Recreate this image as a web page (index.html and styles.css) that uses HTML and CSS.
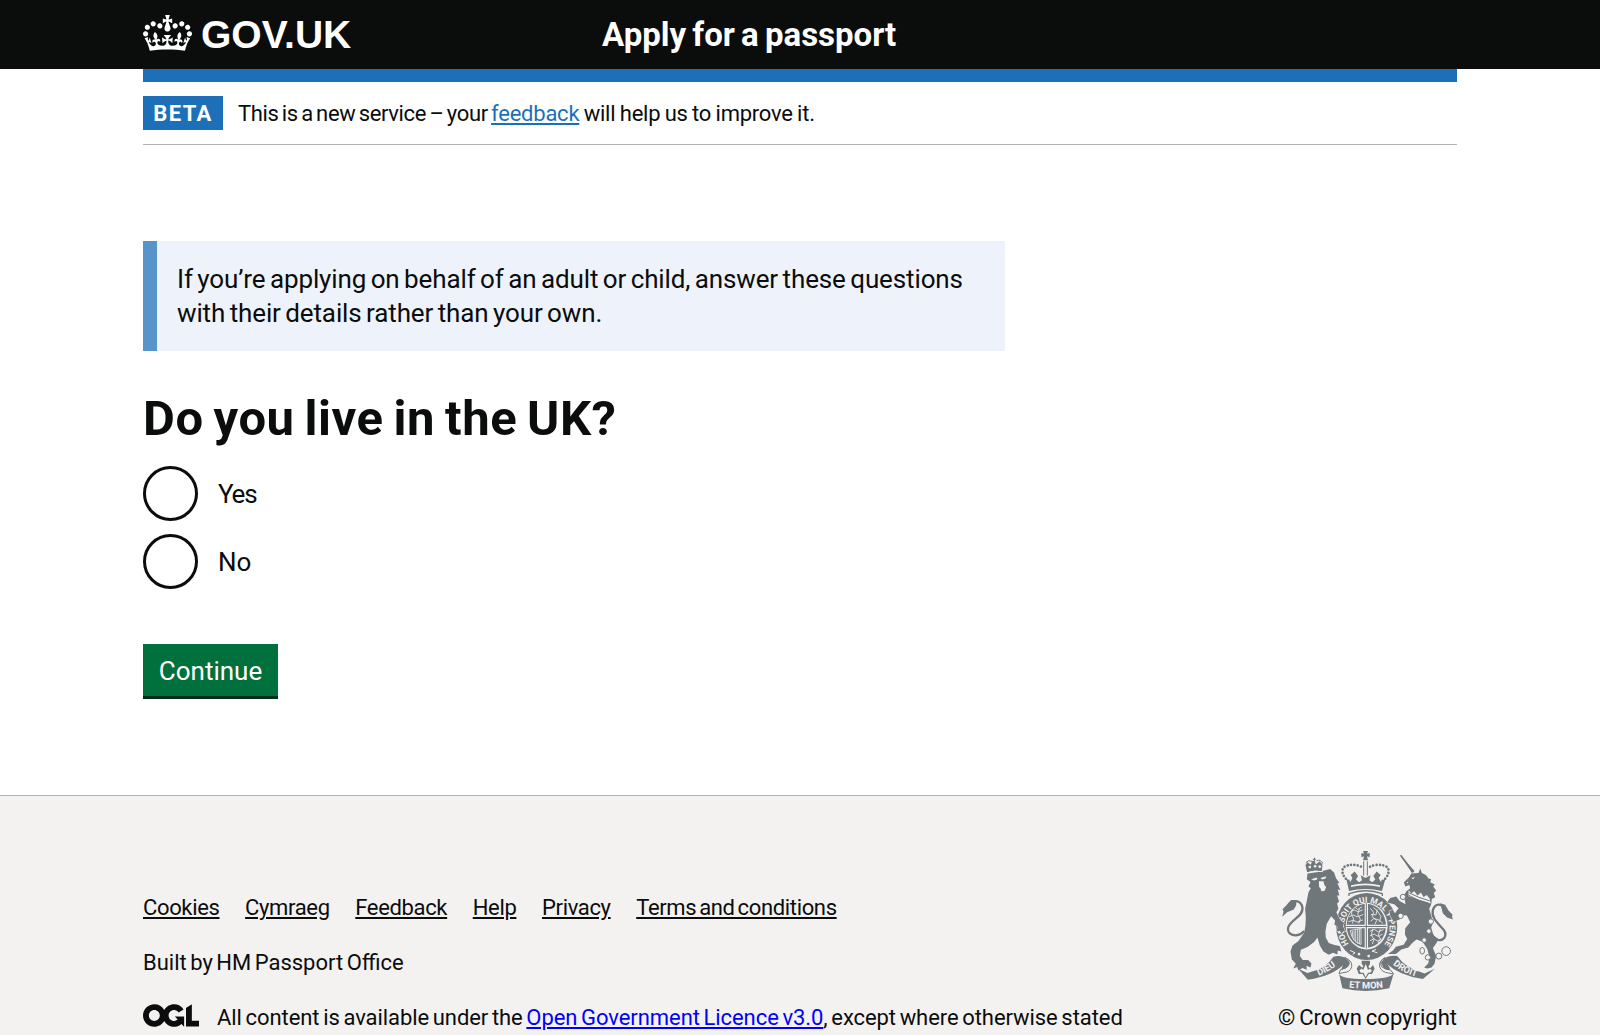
FILE: index.html
```
<!DOCTYPE html>
<html lang="en">
<head>
<meta charset="utf-8">
<title>Do you live in the UK? - Apply for a passport</title>
<link rel="stylesheet" href="styles.css">
</head>
<body>
<header class="header">
  <div class="container header-inner">
    <a class="brand" href="#">
      <svg class="crown" viewBox="0 0 132 97" fill="currentColor" fill-rule="evenodd" aria-hidden="true"><path d="M25 30.2c3.5 1.5 7.7-.2 9.1-3.7 1.5-3.6-.2-7.8-3.9-9.2-3.6-1.4-7.6.3-9.1 3.9-1.4 3.5.3 7.5 3.9 9zM9 39.5c3.6 1.5 7.8-.2 9.2-3.7 1.5-3.6-.2-7.8-3.9-9.1-3.6-1.5-7.6.2-9.1 3.8-1.4 3.5.3 7.5 3.8 9zM4.4 57.2c3.5 1.5 7.7-.2 9.1-3.8 1.5-3.6-.2-7.7-3.9-9.1-3.5-1.5-7.6.3-9.1 3.8-1.4 3.5.3 7.6 3.9 9.1zm38.3-21.4c3.5 1.5 7.7-.2 9.1-3.8 1.5-3.6-.2-7.7-3.9-9.1-3.6-1.5-7.6.3-9.1 3.8-1.3 3.6.4 7.7 3.9 9.1zm64.4-5.6c-3.6 1.5-7.8-.2-9.1-3.7-1.5-3.6.2-7.8 3.8-9.2 3.6-1.4 7.7.3 9.2 3.9 1.3 3.5-.4 7.5-3.9 9zm15.9 9.3c-3.6 1.5-7.7-.2-9.1-3.7-1.5-3.6.2-7.8 3.7-9.1 3.6-1.5 7.7.2 9.2 3.8 1.5 3.5-.3 7.5-3.8 9zm4.7 17.7c-3.6 1.5-7.8-.2-9.2-3.8-1.5-3.6.2-7.7 3.9-9.1 3.6-1.5 7.7.3 9.2 3.8 1.3 3.5-.4 7.6-3.9 9.1zM89.3 35.8c-3.6 1.5-7.8-.2-9.2-3.8-1.4-3.6.2-7.7 3.9-9.1 3.6-1.5 7.7.3 9.2 3.8 1.4 3.6-.3 7.7-3.9 9.1zM69.7 17.7l8.9 4.7V9.3l-8.9 2.8c-.2-.3-.5-.6-.9-.9L72.4 0H59.6l3.5 11.2c-.3.3-.6.5-.9.9l-8.8-2.8v13.1l8.8-4.7c.3.3.6.7.9.9l-5 15.4v.1c-.2.8-.4 1.6-.4 2.4 0 4.1 3.1 7.5 7 8.1h.2c.3 0 .7.1 1 .1.4 0 .7 0 1-.1h.2c4-.6 7.1-4.1 7.1-8.1 0-.8-.1-1.7-.4-2.4V34l-5.1-15.4c.4-.2.7-.6 1-.9zM66 92.8c16.9 0 32.8 1.1 47.1 3.2 4-16.9 8.9-26.7 14-33.5l-9.6-3.4c1 4.9 1.1 7.2 0 10.2-1.5-1.4-3-4.3-4.2-8.7L108.6 76c2.8-2 5-3.2 7.5-3.3-4.4 9.4-10 11.9-13.6 11.2-4.3-.8-6.3-4.6-5.6-7.9 1-4.7 5.7-5.9 8-.5 4.3-8.7-3-11.4-7.6-8.8 7.1-7.2 7.9-13.5 2.1-21.1-8 6.1-8.1 12.3-4.5 20.8-4.7-5.4-12.1-2.5-9.5 6.2 3.4-5.2 7.9-2 7.2 3.1-.6 4.3-6.4 7.8-13.5 7.2-10.3-.9-10.9-8-11.2-13.8 2.5-.5 7.1 1.8 11 7.3L80.2 60c-4.1 4.4-8 5.3-12.3 5.4 1.4-4.4 8-11.6 8-11.6H55.5s6.4 7.2 7.9 11.6c-4.2-.1-8-1-12.3-5.4l1.4 16.4c3.9-5.5 8.5-7.7 10.9-7.3-.3 5.8-.9 12.8-11.1 13.8-7.2.6-12.9-2.9-13.5-7.2-.7-5 3.8-8.3 7.1-3.1 2.7-8.7-4.6-11.6-9.4-6.2 3.7-8.5 3.6-14.7-4.6-20.8-5.8 7.6-5 13.9 2.2 21.1-4.7-2.6-11.9.1-7.7 8.8 2.3-5.5 7.1-4.2 8.1.5.7 3.3-1.3 7.1-5.7 7.9-3.5.7-9-1.8-13.5-11.2 2.5.1 4.7 1.3 7.5 3.3l-4.7-15.4c-1.2 4.4-2.7 7.2-4.3 8.7-1.1-3-.9-5.3 0-10.2l-9.5 3.4c5 6.9 9.9 16.7 14 33.5 14.8-2.1 30.8-3.2 47.7-3.2z"/></svg>
      <span class="brand-name">GOV.UK</span>
    </a>
    <a class="service-name" href="#">Apply for a passport</a>
  </div>
</header>
<div class="container">
  <div class="header-bar"></div>
  <div class="phase">
    <strong class="tag">BETA</strong>
    <span class="phase-text"><span class="phase-intro">This is a new service – your </span><a class="link" href="#">feedback</a> will help us to improve it.</span>
  </div>
  <main class="main">
    <div class="inset">If you’re applying on behalf of an adult or child, answer these questions<br>with their details rather than your own.</div>
    <h1 class="title">Do you live in the UK?</h1>
    <div class="radios">
      <label class="radio"><input class="radio-input" type="radio" name="uk"><span class="radio-label">Yes</span></label>
      <label class="radio"><input class="radio-input" type="radio" name="uk"><span class="radio-label">No</span></label>
    </div>
    <button class="button" type="button">Continue</button>
  </main>
</div>
<footer class="footer">
  <div class="container footer-inner">
    <div class="footer-meta">
      <nav class="footer-links">
        <a href="#">Cookies</a><a href="#">Cymraeg</a><a href="#">Feedback</a><a href="#">Help</a><a href="#">Privacy</a><a href="#">Terms and conditions</a>
      </nav>
      <div class="built">Built by HM Passport Office</div>
      <div class="licence">
        <svg class="ogl" viewBox="0 0 483.2 195.7" fill="currentColor" aria-hidden="true"><path d="M421.5 142.8V.1l-50.7 32.3v161.1h112.4v-50.7zm-122.3-9.6A47.12 47.12 0 0 1 221 97.8c0-26 21.1-47.1 47.1-47.1 16.7 0 31.4 8.7 39.7 21.8l42.7-27.2A97.63 97.63 0 0 0 268.1 0c-36.5 0-68.3 20.1-85.1 49.7A98 98 0 0 0 97.8 0C43.9 0 0 43.9 0 97.8s43.9 97.8 97.8 97.8c36.5 0 68.3-20.1 85.1-49.7a97.76 97.76 0 0 0 149.6 25.4l19.4 22.2h3v-87.8h-80l24.3 27.5zM97.8 145c-26 0-47.1-21.1-47.1-47.1s21.1-47.1 47.1-47.1 47.1 21.1 47.1 47.1S123.8 145 97.8 145"/></svg>
        <span class="licence-text">All content is available under the <a class="licence-link" href="#">Open Government Licence v3.0</a>, except where otherwise stated</span>
      </div>
    </div>
    <a class="copyright" href="#">
      <svg class="crest" viewBox="30 25 525 430" aria-hidden="true">
        <defs>
          <path id="garter" d="M236 310A69 76 0 1 1 343 311"/>
          <path id="scroll-left" d="M128 412Q176 398 212 364"/>
          <path id="scroll-mid" d="M224 440Q288 449 352 440"/>
          <path id="scroll-right" d="M360 365Q396 399 450 412"/>
        </defs>
        <!-- royal crown -->
        <path class="ink" d="M279 31H294L291 39 299 37V50L291 47 294 59H279L282 47 274 50V37L282 39Z"/>
        <path class="line pearls" stroke-width="8" d="M235 121C217 109 209 83 228 76C249 68 266 75 276 79M338 121C356 109 364 83 345 76C324 68 308 75 298 79"/>
        <path class="line" stroke-width="3" d="M281 62V105M292 62V105"/>
        <path class="ink" d="M237 151L228 112 241 124 247 112 242 103 254 93 264 106 258 117 267 125 276 119 272 104 286 112 302 104 298 119 307 125 316 117 310 106 320 93 332 103 326 112 333 124 347 112 336 151Q286 139 237 151Z"/>
        <path class="paper" d="M243 134Q286 124 330 134V139Q286 129 243 139Z"/>
        <path class="line" stroke-width="4" d="M237 166V159Q287 142 337 159V166"/>
        <!-- garter and shield -->
        <ellipse class="ink" cx="290" cy="258" rx="92" ry="101"/>
        <ellipse class="paper" cx="290" cy="257" rx="63" ry="70"/>
        <ellipse class="ink" cx="289" cy="256" rx="59" ry="66"/>
        <path class="white-line" stroke-width="10" d="M289 188V324M228 258H350"/>
        <path class="line" stroke-width="3" d="M289 188V324M228 258H350"/>
        <path class="white-line" stroke-width="2.5" d="M242 213L252 208 264 214 278 208M237 229L249 223 261 229 280 222M235 244L249 239 262 245 279 238M256 201L262 207 276 199M247 206L244 222 251 236 247 249M268 205L263 222 271 236 266 249M301 203L311 216 306 228 320 240 315 251M310 201L321 210 333 228 328 244M302 242L312 234 328 239 339 249M322 207L318 223 303 222M300 272L313 267 325 274 341 267M300 286L313 281 325 288 338 281M300 301L312 295 323 302 334 295M308 266L304 284 312 297 307 311M331 266L325 284 331 295 324 308M241 270L273 264V312Q245 304 241 270M247 272V289M252 271V299M257 269V305M263 267V309M268 266V311"/>
        <text class="motto garter-text"><textPath href="#garter" startOffset="50%">HONI SOIT QUI MAL Y PENSE</textPath></text>
        <circle class="paper" cx="267" cy="341" r="4"/><circle class="paper" cx="296" cy="347" r="4"/><path class="white-line" stroke-width="3" d="M240 330L255 337 248 342M322 337L306 332 318 327"/>
        <!-- lion -->
        <g transform="translate(15 15)">
          <path class="ink edge" d="M97 84L130 79 165 70 177 81 183 98 193 112 187 113 196 133 188 132 193 150 186 150 192 168 186 174 190 190 184 200 190 214 197 225 207 232 204 242 211 258 203 257 202 268 194 256 186 258 187 242 178 238 180 225 168 212 155 235 151 258 152 276 161 293 178 299 194 302 199 318 188 315 187 327 174 322 161 328 145 318 134 300 127 276 117 290 97 305 77 313 74 332 83 344 99 344 109 354 106 366 94 361 95 373 82 368 70 375 66 365 54 369 62 355 50 342 46 318 52 300 70 287 87 262 91 240 92 215 90 190 96 160 100 140 107 128 100 123 106 109 95 101Z"/>
          <path class="line" stroke-width="7" d="M87 257C64 280 33 268 39 246C47 221 83 215 82 188C79 162 49 160 38 181"/>
          <path class="ink" d="M64 164L48 163 36 177 22 191 25 198 21 214 36 200 56 192 63 179Z"/>
          <path class="paper" d="M108 101L125 96 127 101 117 105ZM136 97L154 92 151 99 141 102ZM131 107H145L148 118 153 125 148 136 139 137 136 128 132 124Z"/>
          <path class="ink" d="M96 80L91 58 97 50 107 57 111 46 118 45 122 56 134 47 142 57 140 78Q118 72 96 80Z"/>
          <path class="line" stroke-width="3" d="M118 36V48M113 41H123M92 51Q99 42 111 47M124 46Q137 39 143 54"/>
          <path class="white-line" stroke-width="3" d="M95 82Q118 73 143 78"/>
          <circle class="paper" cx="104" cy="64" r="4"/><circle class="paper" cx="120" cy="62" r="4"/><circle class="paper" cx="134" cy="63" r="4"/>
        </g>
        <!-- unicorn -->
        <g transform="translate(270 15)">
          <path class="ink edge" d="M120 27L164 76 156 82ZM164 83L176 82 181 69 186 82 198 88 206 99 214 101 211 110 225 117 220 123 229 135 222 142 226 155 216 160 214 177 208 190 213 207 220 230 214 246 221 270 236 281 229 294 219 308 229 332 224 355 215 366 202 369 193 366 205 354 209 337 202 310 188 289 170 282 158 292 145 306 124 312 108 326 84 326 99 315 108 304 131 298 142 281 135 267 136 248 151 230 141 210 129 209 119 222 101 229 91 211 88 197 98 193 105 203 116 188 103 176 81 171 91 157 109 153 119 166 137 176 132 150 140 136 151 128 148 118 136 123 132 110 147 96 154 84Z"/>
          <path class="line horn" stroke-width="5" d="M122 29L161 80"/>
          <path class="line" stroke-width="7" d="M217 268C236 300 268 277 253 255C239 237 213 218 219 194C226 171 247 174 253 190"/>
          <path class="ink" d="M241 173L256 178 266 195 278 207 277 214 279 222 262 216 249 203 245 188Z"/>
          <path class="paper" d="M146 134L154 143 163 137 173 150 183 141 191 154 201 148 210 160 212 174 146 152ZM154 97L165 94 160 101ZM140 111L145 108 144 113Z"/>
          <path class="line" stroke-width="3" d="M146 149Q176 168 207 173M148 142Q176 157 210 166"/>
          <g class="paper chain"><circle cx="129" cy="154" r="8"/><circle cx="122" cy="211" r="8"/><circle cx="213" cy="228" r="8"/><circle cx="207" cy="257" r="7"/><circle cx="193" cy="284" r="7"/><ellipse cx="187" cy="316" rx="7" ry="10"/><circle cx="204" cy="336" r="8"/><circle cx="237" cy="332" r="9"/><circle cx="259" cy="317" r="13"/></g>
        </g>
        <!-- scroll -->
        <path class="ink" d="M84 385L112 398Q168 385 190 349Q208 343 224 351L239 366 229 385Q223 393 215 394Q211 380 226 368Q188 408 113 418Z"/>
        <path class="ink" d="M495 385L464 399Q406 384 382 347Q365 343 345 352L333 366 340 381Q347 390 360 393Q363 380 347 368Q390 407 459 416Z"/>
        <path class="paper outline" d="M224 351Q244 363 235 377Q228 385 211 388L207 400 218 397Q240 397 245 379Q248 361 224 351ZM345 352Q326 361 335 379Q345 388 362 389L371 401 356 398Q335 396 329 379Q326 362 345 352Z"/>
        <path class="ink" d="M207 400Q213 416 284 416Q358 416 371 400L358 444Q287 460 217 444Z"/>
        <path class="ink" d="M275 361H300V371L295 379 300 384 309 374 314 384 306 401H296L287 416 278 401H266L260 384 267 374 277 382 280 377 275 371Z"/>
        <path class="paper" d="M287 371L294 389 300 385 306 391 300 397H294L287 411 281 397H272L268 390 275 384 280 389Z"/>
        <text class="motto"><textPath href="#scroll-left" startOffset="50%">DIEU</textPath></text>
        <text class="motto"><textPath href="#scroll-mid" startOffset="50%">ET MON</textPath></text>
        <text class="motto"><textPath href="#scroll-right" startOffset="50%">DROIT</textPath></text>
      </svg>
      <span>© Crown copyright</span>
    </a>
  </div>
</footer>
</body>
</html>
```
FILE: styles.css
```
* { box-sizing: border-box; }
html { height: 100%; overflow: hidden; }
body { margin: 0; height: 1035px; overflow: hidden; background: #fff; color: #0b0c0c; font-family: Roboto, "Noto Sans", sans-serif; font-size: 22px; }
.container { width: 1314px; margin: 0 auto; }
.header { background: #0b0c0c; height: 69px; color: #fff; }
.header-inner { display: flex; align-items: center; height: 69px; }
.header a { color: #fff; text-decoration: none; }
.brand { display: flex; align-items: center; width: 459px; }
.crown { width: 49px; height: 36px; margin-top: -4px; }
.brand-name { font: bold 39px/1 "Liberation Sans", Arial, sans-serif; margin: -1px 0 0 9px; }
.service-name { font-size: 33px; font-weight: 700; word-spacing: -2px; }
.header-bar { height: 13px; background: #1d70b8; }
.phase { display: flex; align-items: center; height: 63px; border-bottom: 1px solid #b1b4b6; }
.tag { display: flex; align-items: center; justify-content: center; width: 80px; height: 34px; background: #1d70b8; color: #fff; letter-spacing: 1.4px; }
.phase-text { margin-left: 15px; letter-spacing: -.24px; word-spacing: -.8px; }
.phase-intro { letter-spacing: -.35px; word-spacing: -1.8px; }
.link { color: #1d70b8; }
.main { padding-top: 96px; }
.inset { width: 862px; height: 110px; padding: 21px 20px; border-left: 14px solid #5694ca; background: #eef3fb; font-size: 26px; line-height: 34px; letter-spacing: -.13px; word-spacing: -1.8px; white-space: nowrap; }
.title { margin: 40px 0 0; font-size: 49px; line-height: 56px; letter-spacing: .55px; word-spacing: -2.8px; }
.radios { display: flex; flex-direction: column; gap: 13px; margin-top: 19px; }
.radio { display: flex; align-items: center; height: 55px; font-size: 26px; letter-spacing: -1.2px; }
.radio:last-child { letter-spacing: -.1px; }
.radio-input { appearance: none; width: 55px; height: 55px; margin: 0 20px 0 0; border: 3px solid #0b0c0c; border-radius: 50%; }
.button { display: block; width: 135px; height: 55px; margin-top: 55px; padding: 1px 0 0; border: 0; border-bottom: 3px solid #002d18; background: #00703c; color: #fff; font: 26px Roboto, sans-serif; }
.footer { margin-top: 96px; height: 241px; border-top: 1px solid #b1b4b6; background: #f3f2f1; }
.footer-inner { display: flex; justify-content: space-between; }
.footer-meta { display: flex; flex-direction: column; gap: 25px; padding-top: 97px; line-height: 30px; white-space: nowrap; }
.footer-links { display: flex; gap: 25.6px; letter-spacing: -.35px; word-spacing: -2.2px; }
.footer-links a { color: #0b0c0c; }
.built { word-spacing: -2px; }
.licence { display: flex; letter-spacing: -.07px; word-spacing: -1.7px; }
.ogl { width: 56px; height: 23px; margin: 1px 18px 0 0; }
.licence-link { color: #00f; }
.copyright { display: flex; flex-direction: column; align-items: flex-end; padding-top: 53px; line-height: 30px; word-spacing: -1.6px; color: #0b0c0c; text-decoration: none; }
.crest { width: 175px; height: 143px; margin: 0 2px 11px 0; }
.ink { fill: #6f777b; }
.edge { stroke: #f3f2f1; stroke-width: 3; paint-order: stroke; }
.paper { fill: #f3f2f1; }
.line { fill: none; stroke: #6f777b; }
.white-line { fill: none; stroke: #f3f2f1; }
.pearls { stroke-linecap: round; stroke-dasharray: .1 10; }
.outline { stroke: #6f777b; stroke-width: 3; }
.chain { stroke: #6f777b; stroke-width: 3; }
.motto { fill: #f3f2f1; font-family: Roboto, sans-serif; font-size: 28px; font-weight: 700; letter-spacing: 0; word-spacing: 0; text-anchor: middle; }
.garter-text { font-size: 25px; }
```
